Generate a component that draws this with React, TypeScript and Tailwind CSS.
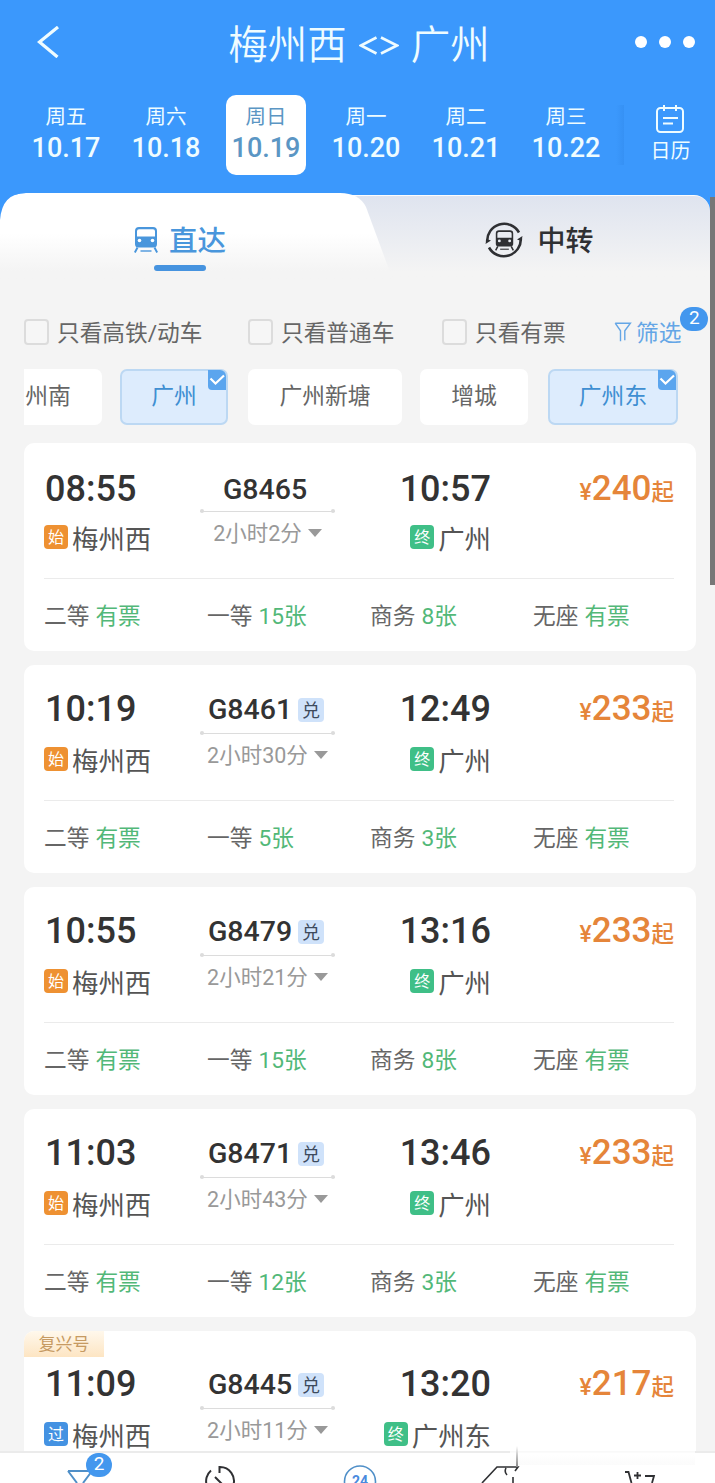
import type { ReactNode } from 'react';
import clsx from 'clsx';

type Train = {
  depart: string;
  arrive: string;
  code: string;
  exchange: boolean;
  duration: string;
  to: string;
  price: number;
  from: string;
  passing?: boolean;
  tag?: string;
  seats: [string, string][];
};

const days = [
  ['周五', '10.17'],
  ['周六', '10.18'],
  ['周日', '10.19'],
  ['周一', '10.20'],
  ['周二', '10.21'],
  ['周三', '10.22'],
];

const trains: Train[] = [
  {
    depart: '08:55', arrive: '10:57', code: 'G8465', exchange: false, duration: '2小时2分',
    from: '梅州西', to: '广州', price: 240,
    seats: [['二等', '有票'], ['一等', '15张'], ['商务', '8张'], ['无座', '有票']],
  },
  {
    depart: '10:19', arrive: '12:49', code: 'G8461', exchange: true, duration: '2小时30分',
    from: '梅州西', to: '广州', price: 233,
    seats: [['二等', '有票'], ['一等', '5张'], ['商务', '3张'], ['无座', '有票']],
  },
  {
    depart: '10:55', arrive: '13:16', code: 'G8479', exchange: true, duration: '2小时21分',
    from: '梅州西', to: '广州', price: 233,
    seats: [['二等', '有票'], ['一等', '15张'], ['商务', '8张'], ['无座', '有票']],
  },
  {
    depart: '11:03', arrive: '13:46', code: 'G8471', exchange: true, duration: '2小时43分',
    from: '梅州西', to: '广州', price: 233,
    seats: [['二等', '有票'], ['一等', '12张'], ['商务', '3张'], ['无座', '有票']],
  },
  {
    depart: '11:09', arrive: '13:20', code: 'G8445', exchange: true, duration: '2小时11分',
    from: '梅州西', to: '广州东', price: 217, passing: true, tag: '复兴号',
    seats: [],
  },
];

const TrainIcon = ({ className, hole }: { className: string; hole: string }) => (
  <svg viewBox="0 0 24 26" className={className} fill="none">
    <path d="M5 0h14a4 4 0 0 1 4 4v13a3.500 3.500 0 0 1-3.500 3.500h-15A3.500 3.500 0 0 1 1 17V4a4 4 0 0 1 4-4z" fill="currentColor" />
    <path d="M5 2.200h14q2 0 2 2v5.300H3V4.200q0-2 2-2z" fill={hole} />
    <circle cx="5.500" cy="13.500" r="1.800" fill={hole} />
    <circle cx="18.500" cy="13.500" r="1.800" fill={hole} />
    <path d="M3.500 20.500.800 25.500M20.500 20.500l2.700 5" stroke="currentColor" strokeWidth="2" />
    <path d="M6.500 24h11" stroke="currentColor" strokeWidth="1.400" />
  </svg>
);

const TransferIcon = () => (
  <div className="relative flex h-[38px] w-[38px] items-center justify-center">
    <svg viewBox="0 0 38 38" className="absolute inset-0" fill="none" stroke="#2f3033" strokeWidth="2.600">
      <path d="M2.200 21A17 17 0 0 1 34 11.500" />
      <path d="M35.800 17A17 17 0 0 1 4 26.500" />
      <path d="M.500 23 6 19.500 1.500 18zM37.500 15 32 18.500 36.500 20z" fill="#2f3033" stroke="none" />
    </svg>
    <TrainIcon className="h-[21px] w-[19px] text-[#2f3033]" hole="#e9ecf2" />
  </div>
);

const FunnelIcon = ({ className }: { className: string }) => (
  <svg viewBox="0 0 18 20" className={className} fill="none" stroke="currentColor" strokeWidth="1.400">
    <path d="M1.200 1.200h15.200L10.800 8.800v9.500M1.200 1.200l5.300 7.600v10.500" />
  </svg>
);

const Header = () => (
  <header className="h-[195px] shrink-0 bg-[#3b98fc] text-[#effcff]">
    <div className="flex h-[84px] items-center justify-between pl-[37px] pr-5">
      <svg viewBox="0 0 22 32" className="h-8 w-[22px]" fill="none" stroke="currentColor" strokeWidth="3.200">
        <path d="M21 1 2.500 16 20.500 31" />
      </svg>
      <h1 className="flex items-center gap-[12px] pl-[24px] pt-[8px] text-[39.500px] leading-none font-[350]">
        <span>梅州西</span>
        <svg viewBox="0 0 40 19" className="-mt-[2px] h-[19px] w-10" fill="none" stroke="currentColor" strokeWidth="2.600">
          <path d="M17.500 1.500 2 9.500l15.500 8M22 1.500l16 8-16 8" />
        </svg>
        <span>广州</span>
      </h1>
      <div className="flex gap-3">
        <i className="h-3 w-3 rounded-full bg-white" />
        <i className="h-3 w-3 rounded-full bg-white" />
        <i className="h-3 w-3 rounded-full bg-white" />
      </div>
    </div>
    <div className="flex pl-4 pt-[11px]">
      {days.map(([week, date]) => (
        <div key={date} className="flex w-[100px] justify-center">
          <div
            className={clsx(
              'flex h-20 w-20 flex-col items-center rounded-[10px] pt-[11px]',
              date === '10.19' && 'bg-white text-[#5b96c4]',
            )}
          >
            <span className="text-[20.500px] leading-[22px]">{week}</span>
            <span className="mt-[6px] text-[27px] leading-[28px] font-medium">{date}</span>
          </div>
        </div>
      ))}
      <div className="h-[60px] w-2 self-center bg-linear-to-r from-[#3b98fc] to-[#3691f4]" />
      <div className="flex flex-1 flex-col items-center pl-[2px] pt-[10px]">
        <svg viewBox="0 0 28 28" className="-ml-[2px] h-7 w-7" fill="none" stroke="currentColor" strokeWidth="2">
          <rect x="1" y="3" width="26" height="24" rx="3.500" />
          <path d="M8 0v6M20 0v6M7 13h15M7 18.500h10" />
        </svg>
        <span className="mt-[7px] text-[20px] leading-[22px]">日历</span>
      </div>
    </div>
  </header>
);

const Tabs = () => (
  <div className="relative z-10 -mt-[2px] h-[90px] shrink-0">
    <div className="absolute inset-x-0 bottom-0 top-[2px] bg-[#f4f4f4]">
      <div className="h-5 bg-[#3b98fc]" />
      <div className="-mt-5 h-full w-[710px] rounded-tr-[16px] border-t border-white/80 bg-linear-to-b from-[#dfe4ef] to-[#f4f4f4] to-[76px]" />
    </div>
    <div className="absolute left-0 top-0 h-[90px] w-[400px] bg-linear-to-b from-white from-45% to-[#f4f4f4] to-[78px] [clip-path:path('M0_90V27Q2_0_26_0H340Q359_0_366_14L394_90Z')]" />
    <div className="absolute left-0 top-0 h-[27px] w-[27px] bg-[#3b98fc] [clip-path:path('M0_0H26Q2_0_0_27Z')]" />
    <div className="relative flex h-[78px]">
      <div className="flex w-[360px] shrink-0 flex-col items-center">
        <div className="flex h-[75px] items-center gap-[11px] pt-[19px] text-[28.500px] leading-none text-[#4996dc]">
          <TrainIcon className="h-[26px] w-6" hole="#fff" />
          <span className="pt-[5px] font-medium">直达</span>
        </div>
        <div className="-mt-[2px] h-[6px] w-[52px] shrink-0 rounded-full bg-[#4693df]" />
      </div>
      <div className="flex h-[76px] w-[359px] shrink-0 items-center justify-center gap-[14px] pt-[18px] text-[28px] leading-none text-[#2f3033]">
        <TransferIcon />
        <span className="pt-[4px] font-medium">中转</span>
      </div>
    </div>
  </div>
);

const Check = ({ children, className }: { children: ReactNode; className: string }) => (
  <label className={clsx('flex items-center gap-2 text-[22.700px] leading-none text-[#666]', className)}>
    <span className="h-[26px] w-[25px] rounded-[4px] border-2 border-[#dcdcdc] bg-[#f6f6f6]" />
    <span className="pt-1">{children}</span>
  </label>
);

const Filters = () => (
  <div className="flex h-[74px] shrink-0 items-center whitespace-nowrap pl-6 pt-[24px]">
    <Check className="w-[224px]">只看高铁/动车</Check>
    <Check className="w-[194px]">只看普通车</Check>
    <Check className="w-[172px]">只看有票</Check>
    <div className="relative flex items-center gap-1 text-[22.700px] leading-none text-[#64a6e6]">
      <FunnelIcon className="h-5 w-[18px]" />
      <span className="pt-1">筛选</span>
      <span className="absolute -right-[27px] -top-[12px] flex h-6 w-7 items-center justify-center rounded-full bg-[#4397ee] pb-[2px] text-[19px] text-white">
        2
      </span>
    </div>
  </div>
);

const Chip = ({ children, active, className }: { children: ReactNode; active?: boolean; className: string }) => (
  <div
    className={clsx(
      'relative flex h-14 shrink-0 items-center justify-center text-[22.800px] leading-none',
      active ? 'rounded-[7px] border-2 border-[#bcd8f3] bg-[#ddecfd] text-[#3f8fd2]' : 'bg-white text-[#666]',
      className,
    )}
  >
    {children}
    {active && (
      <span className="absolute -top-px right-0 flex h-5 w-[18px] items-center justify-center rounded-bl-[4px] rounded-tr-[6px] bg-[#5ba5ee]">
        <svg viewBox="0 0 16 12" className="h-3 w-4" fill="none" stroke="#fff" strokeWidth="2.200">
          <path d="M1.500 4.500 6.500 9.500 15 1.500" />
        </svg>
      </span>
    )}
  </div>
);

const Badge = ({ children, className }: { children: ReactNode; className: string }) => (
  <span className={clsx('flex h-6 w-6 items-center justify-center rounded-[4px] pt-px text-[16px] leading-none text-white', className)}>
    {children}
  </span>
);

const TrainCard = ({ train }: { train: Train }) => (
  <article className={clsx('relative h-[208px] shrink-0 rounded-[10px] bg-white pl-5 pr-[22px]', train.tag && 'pt-[9px]')}>
    {train.tag && (
      <span className="absolute left-0 top-0 flex h-[26px] w-20 items-center justify-center rounded-tl-[10px] bg-linear-to-b from-[#fff8ec] to-[#fde5c3] text-[17px] leading-none text-[#c69a62]">
        {train.tag}
      </span>
    )}
    <div className="grid h-[136px] grid-cols-[156px_135px_156px_1fr] border-b border-[#ebebeb]">
      <div>
        <div
          className={clsx(
            'flex h-[68px] items-center pl-px text-[36px] leading-none font-medium text-[#333]',
            train.exchange ? 'pt-[20px]' : 'pt-6',
          )}
        >
          {train.depart}
        </div>
        <div className="flex h-[52px] items-center gap-1 text-[26.400px] leading-none text-[#555]">
          <Badge className={train.passing ? 'bg-[#4492e2]' : 'bg-[#ee9132]'}>{train.passing ? '过' : '始'}</Badge>
          <span className="pt-[6px]">{train.from}</span>
        </div>
      </div>
      <div className="text-center">
        <div
          className={clsx(
            'relative flex h-[69px] items-center justify-center gap-[6px] border-b-[1.500px] border-[#dcdcdc] text-[28.500px] leading-none font-medium text-[#333]',
            train.exchange ? 'pr-[3px] pt-[22px]' : 'pr-[5px] pt-[26px]',
          )}
        >
          {train.code}
          {train.exchange && (
            <span className="flex h-6 w-[26px] items-center justify-center rounded-[4px] bg-[#cfe2fa] pt-[2px] text-[18px] font-normal text-[#3d4a5c]">
              兑
            </span>
          )}
          <i className="absolute -bottom-[2px] left-0 h-1 w-1 rounded-full bg-[#dcdcdc]" />
          <i className="absolute -bottom-[2px] right-0 h-1 w-1 rounded-full bg-[#dcdcdc]" />
        </div>
        <div className="flex h-[41px] items-center justify-center gap-[6px] text-[21.500px] leading-none text-[#999]">
          <span className="pt-[2px]">{train.duration}</span>
          <i className="h-0 w-0 border-x-[7px] border-t-[8px] border-x-transparent border-t-[#999]" />
        </div>
      </div>
      <div className="flex flex-col items-end">
        <div
          className={clsx(
            'flex h-[68px] items-center text-[36px] leading-none font-medium text-[#333]',
            train.exchange ? 'pt-[20px]' : 'pt-6',
          )}
        >
          {train.arrive}
        </div>
        <div className="flex h-[52px] items-center gap-1 text-[26.400px] leading-none text-[#555]">
          <Badge className="bg-[#3fbf87]">终</Badge>
          <span className="pt-[6px]">{train.to}</span>
        </div>
      </div>
      <div
        className={clsx(
          'flex h-[68px] items-baseline justify-end leading-[36px] font-medium text-[#e5853a]',
          train.exchange ? 'pt-[26px]' : 'pt-7',
        )}
      >
        <span className="text-[23px]">¥</span>
        <span className="text-[35px]">{train.price}</span>
        <span className="text-[22.500px]">起</span>
      </div>
    </div>
    <div className="grid h-[72px] grid-cols-[163px_163px_163px_1fr] items-center pt-[5px] text-[22.700px] leading-none">
      {train.seats.map(([name, left]) => (
        <div key={name} className="flex gap-[6px] whitespace-nowrap">
          <span className="text-[#666]">{name}</span>
          <span className="text-[#52b878]">{left}</span>
        </div>
      ))}
    </div>
  </article>
);

// only the top edge of the bar is on screen
const BottomBar = () => (
  <nav className="relative flex h-[32px] shrink-0 overflow-hidden border-t-2 border-[#ebebeb] bg-white text-[#2f3033]">
    <svg viewBox="0 0 715 30" className="h-[30px] w-[715px] shrink-0" fill="none" stroke="currentColor" strokeWidth="2">
      <path d="M68 18h24M68 18l9 12M92 18l-9 12" stroke="#4f8fc8" />
      <path d="M211 17.500A14 14 0 0 0 207 33M219.500 20v-6A14 14 0 0 1 233 33M215 24l7 7" />
      <circle cx="360" cy="28.500" r="15.500" stroke="#4f8fc8" strokeWidth="1.600" />
      <path d="M482 30 497 14H518L515 18M506 15Q504 19 507 22M513 24v6" strokeWidth="1.600" />
      <path d="M625 19h3.500l3 11M634 22.500h7M637.500 19v7M645 23h9l-2 7" strokeWidth="1.800" />
      <text x="360" y="33" textAnchor="middle" fill="#4a8ade" stroke="none" className="text-[14px] font-bold">24</text>
    </svg>
    <span className="absolute left-[86px] top-0 flex h-6 w-[26px] items-center justify-center rounded-full bg-[#4397ee] pb-[3px] text-[19px] leading-none text-white">
      2
    </span>
  </nav>
);

export default function App() {
  return (
    <div className="relative flex h-[1483px] w-[715px] flex-col overflow-hidden bg-[#f4f4f4] font-['Roboto','Noto_Sans_CJK_SC',sans-serif]">
      <Header />
      <Tabs />
      <Filters />
      <div className="ml-6 mt-3 flex h-14 shrink-0">
        <Chip className="mr-[18px] w-[78px] rounded-r-[7px] pr-[30px]">州南</Chip>
        <Chip active className="mr-5 w-[108px]">广州</Chip>
        <Chip className="mr-[18px] w-[154px] rounded-[7px]">广州新塘</Chip>
        <Chip className="mr-5 w-[108px] rounded-[7px]">增城</Chip>
        <Chip active className="w-[130px]">广州东</Chip>
      </div>
      <main className="ml-6 mr-[19px] mt-[18px] flex min-h-0 flex-1 flex-col gap-[14px] overflow-hidden">
        {trains.map((train) => (
          <TrainCard key={train.code} train={train} />
        ))}
      </main>
      <BottomBar />
      <div className="absolute left-[510px] top-[1444px] h-[21px] w-[185px] bg-linear-to-b from-white/0 via-white to-[#fbfbfb]" />
      <div className="absolute left-[516px] top-[1446px] h-[21px] w-[2px] bg-linear-to-b from-white to-[#888]" />
      <div className="absolute right-0 top-[197px] z-20 h-[388px] w-[5px] bg-[#777]" />
    </div>
  );
}
